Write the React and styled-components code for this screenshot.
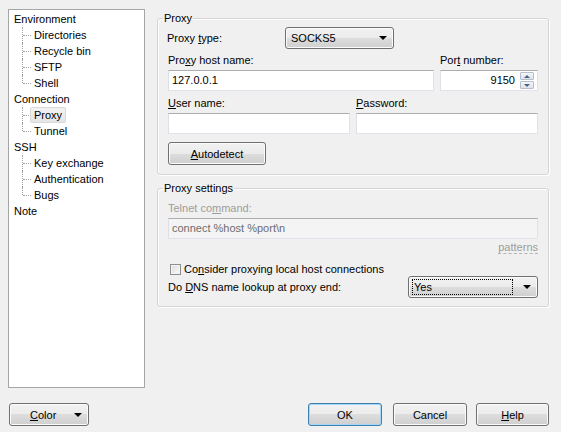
import React from 'react';
import styled, { createGlobalStyle } from 'styled-components';

const GlobalStyle = createGlobalStyle`
  body {
    margin: 0;
    background: #f0f0f0;
    font-family: "Liberation Sans", Arial, sans-serif;
    font-size: 11px;
    color: #000;
  }
`;

const Window = styled.div`
  width: 561px;
  height: 432px;
  background: #f0f0f0;
  box-sizing: border-box;
  padding: 9px 0 0 8px;
  display: flex;
  flex-direction: column;
`;

const Main = styled.div`
  display: flex;
  gap: 12px;
  height: 379px;
`;

const Tree = styled.div`
  width: 137px;
  height: 379px;
  box-sizing: border-box;
  background: #fff;
  border: 1px solid #a5a5a5;
  padding-top: 1px;
`;

const Node = styled.div`
  height: 16px;
  line-height: 16px;
  padding-left: 5px;
`;

const Child = styled.div`
  height: 16px;
  display: flex;
  align-items: stretch;
  padding-left: 13px;
`;

const Elbow = styled.span`
  width: 8px;
  position: relative;
  flex: none;
  &::before {
    content: '';
    position: absolute;
    left: 0;
    top: 0;
    height: ${(p) => (p.$last ? '8px' : '16px')};
    border-left: 1px dotted #a0a0a0;
  }
  &::after {
    content: '';
    position: absolute;
    left: 1px;
    top: 8px;
    width: 8px;
    border-top: 1px dotted #a0a0a0;
  }
`;

const ChildLabel = styled.span`
  line-height: 14px;
  padding: 0 3px;
  border: 1px solid ${(p) => (p.$selected ? '#d9d9d9' : 'transparent')};
  border-radius: 2px;
  background: ${(p) => (p.$selected ? 'linear-gradient(#f2f2f2, #e5e5e5)' : 'transparent')};
  position: relative;
`;

const Panel = styled.div`
  width: 392px;
  padding-top: 3px;
  display: flex;
  flex-direction: column;
  gap: 7px;
`;

const Group = styled.fieldset`
  margin: 0;
  padding: 0 10px;
  border: 1px solid #d5d5d5;
  border-radius: 3px;
  box-shadow: inset 1px 1px 0 #fff, 1px 1px 0 #fff;
  height: ${(p) => p.$h}px;
  box-sizing: border-box;
  display: flex;
  flex-direction: column;
  min-width: 0;
`;

const Legend = styled.legend`
  padding: 0 1px;
  margin-left: -5px;
  line-height: 13px;
`;

const Row = styled.div`
  display: flex;
  align-items: center;
  margin-top: ${(p) => p.$mt || 0}px;
`;

const Cols = styled.div`
  display: grid;
  grid-template-columns: ${(p) => p.$cols};
  column-gap: 6px;
  margin-top: ${(p) => p.$mt || 0}px;
`;

const Label = styled.div`
  line-height: 13px;
  height: 13px;
  color: ${(p) => (p.$disabled ? '#9d9d9d' : '#000')};
  margin-left: ${(p) => p.$ml || 0}px;
  white-space: nowrap;
`;

const U = styled.span`
  text-decoration: underline;
  text-underline-offset: 1px;
`;

const Input = styled.div`
  height: 21px;
  box-sizing: border-box;
  border: 1px solid #e2e3ea;
  border-top-color: #abadb3;
  border-left-color: #dbdfe6;
  background: ${(p) => (p.$disabled ? '#f4f4f4' : '#fff')};
  color: ${(p) => (p.$disabled ? '#6d6d6d' : '#000')};
  line-height: 19px;
  padding: 0 3px;
  display: flex;
  align-items: center;
  justify-content: ${(p) => (p.$right ? 'flex-end' : 'flex-start')};
  margin-top: 3px;
`;

const Spinner = styled.div`
  width: 14px;
  height: 17px;
  margin-left: 5px;
  display: flex;
  flex-direction: column;
  gap: 1px;
`;

const SpinBtn = styled.div`
  flex: 1;
  border: 1px solid #b5bec9;
  border-radius: 1px;
  background: linear-gradient(#f4f6f8, #dde3ea);
  display: flex;
  align-items: center;
  justify-content: center;
`;

const Button = styled.div`
  height: 23px;
  width: ${(p) => p.$w}px;
  flex: none;
  box-sizing: border-box;
  border: 1px solid ${(p) => (p.$default ? '#3c7fb1' : '#707070')};
  border-radius: 3px;
  background: linear-gradient(#f2f2f2 0%, #ebebeb 50%, #dddddd 50%, #cfcfcf 100%);
  box-shadow: inset 0 0 0 1px ${(p) => (p.$default ? '#a4d6f5' : '#fbfbfb')};
  display: flex;
  align-items: center;
  justify-content: center;
  margin-right: ${(p) => p.$mr || 0}px;
`;

const Combo = styled(Button)`
  height: ${(p) => p.$h || 22}px;
  justify-content: space-between;
  padding: 0 6px 0 ${(p) => p.$pl || 3}px;
`;

const FocusText = styled.span`
  flex: 1;
  line-height: 14px;
  border: 1px dotted ${(p) => (p.$focus ? '#000' : 'transparent')};
  margin-right: 10px;
  padding-left: 1px;
`;

const Arrow = styled.span`
  width: 0;
  height: 0;
  border-left: 4px solid transparent;
  border-right: 4px solid transparent;
  border-top: 4px solid #000;
`;

const Small = styled.span`
  width: 0;
  height: 0;
  border-left: 3px solid transparent;
  border-right: 3px solid transparent;
  ${(p) => (p.$up ? 'border-bottom: 3px solid #4d6185;' : 'border-top: 3px solid #4d6185;')}
`;

const Patterns = styled.div`
  align-self: flex-end;
  color: #9d9d9d;
  line-height: 12px;
  border-bottom: 1px dashed #b5b5b5;
  margin-top: 2px;
`;

const Check = styled.span`
  width: 11px;
  height: 11px;
  box-sizing: border-box;
  border: 1px solid #8f8f8f;
  background: linear-gradient(135deg, #dcdcdc, #fbfbfb);
  box-shadow: inset 0 0 0 1px #f4f4f4;
  margin: 0 3px 0 2px;
`;

const Footer = styled.div`
  display: flex;
  align-items: center;
  margin-top: 15px;
  padding-left: 1px;
  width: 540px;
`;

const Spacer = styled.div`
  flex: 1;
`;

const tree = [
  { name: 'Environment', children: ['Directories', 'Recycle bin', 'SFTP', 'Shell'] },
  { name: 'Connection', children: ['Proxy', 'Tunnel'] },
  { name: 'SSH', children: ['Key exchange', 'Authentication', 'Bugs'] },
  { name: 'Note', children: [] },
];

export default function App() {
  return (
    <>
      <GlobalStyle />
      <Window>
        <Main>
          <Tree>
            {tree.map((n) => (
              <React.Fragment key={n.name}>
                <Node>{n.name}</Node>
                {n.children.map((c, i) => (
                  <Child key={c}>
                    <Elbow $last={i === n.children.length - 1} />
                    <ChildLabel $selected={c === 'Proxy'}>{c}</ChildLabel>
                  </Child>
                ))}
              </React.Fragment>
            ))}
          </Tree>
          <Panel>
            <Group $h={163}>
              <Legend>Proxy</Legend>
              <Row $mt={2}>
                <Label $ml={-1} style={{ width: 118 }}>
                  Proxy <U>t</U>ype:
                </Label>
                <Combo $w={109}>
                  <FocusText>SOCKS5</FocusText>
                  <Arrow />
                </Combo>
              </Row>
              <Cols $cols="1fr 98px" $mt={5}>
                <div>
                  <Label>
                    Pro<U>x</U>y host name:
                  </Label>
                  <Input>127.0.0.1</Input>
                </div>
                <div>
                  <Label>
                    Por<U>t</U> number:
                  </Label>
                  <Input $right>
                    9150
                    <Spinner>
                      <SpinBtn>
                        <Small $up />
                      </SpinBtn>
                      <SpinBtn>
                        <Small />
                      </SpinBtn>
                    </Spinner>
                  </Input>
                </div>
              </Cols>
              <Cols $cols="1fr 1fr" $mt={6}>
                <div>
                  <Label>
                    <U>U</U>ser name:
                  </Label>
                  <Input />
                </div>
                <div>
                  <Label>
                    <U>P</U>assword:
                  </Label>
                  <Input />
                </div>
              </Cols>
              <Row $mt={8}>
                <Button $w={98}>
                  <span>
                    <U>A</U>utodetect
                  </span>
                </Button>
              </Row>
            </Group>
            <Group $h={125}>
              <Legend>Proxy settings</Legend>
              <Label $disabled style={{ marginTop: 7 }}>
                Telnet co<U>m</U>mand:
              </Label>
              <Input $disabled>connect %host %port\n</Input>
              <Patterns>patterns</Patterns>
              <Row $mt={9}>
                <Check />
                <span>
                  Co<U>n</U>sider proxying local host connections
                </span>
              </Row>
              <Row $mt={1} style={{ justifyContent: 'space-between' }}>
                <Label>
                  Do <U>D</U>NS name lookup at proxy end:
                </Label>
                <Combo $w={130}>
                  <FocusText $focus>Yes</FocusText>
                  <Arrow />
                </Combo>
              </Row>
            </Group>
          </Panel>
        </Main>
        <Footer>
          <Combo $w={80} $h={23} $pl={20}>
            <span>
              <U>C</U>olor
            </span>
            <Arrow />
          </Combo>
          <Spacer />
          <Button $w={74} $mr={11} $default>
            OK
          </Button>
          <Button $w={74} $mr={9}>
            Cancel
          </Button>
          <Button $w={73}>
            <span>
              <U>H</U>elp
            </span>
          </Button>
        </Footer>
      </Window>
    </>
  );
}
